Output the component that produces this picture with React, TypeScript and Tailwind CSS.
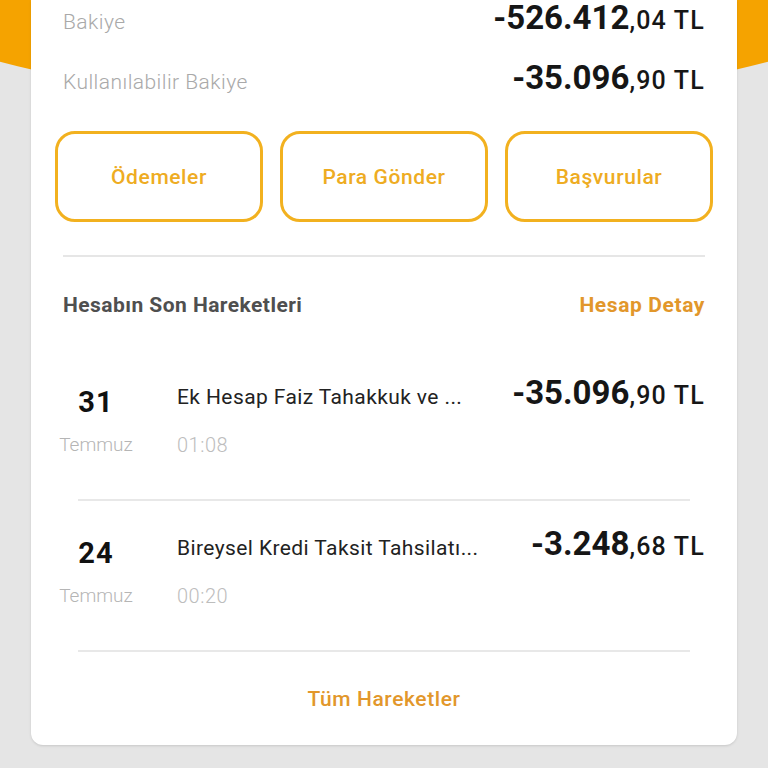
const Amount = ({ whole, cents }: { whole: string; cents: string }) => {
  return (
    <span className="whitespace-nowrap leading-none text-[#161616]">
      <span className="text-[33px] font-bold">{whole}</span>
      <span className="text-[25px] font-medium tracking-[1.2px]">,{cents} TL</span>
    </span>
  );
};

const Transaction = ({
  day,
  month,
  title,
  time,
  whole,
  cents,
}: {
  day: string;
  month: string;
  title: string;
  time: string;
  whole: string;
  cents: string;
}) => {
  return (
    <div className="flex items-start pl-[24px] pr-[32px]">
      <div className="w-[82px] flex flex-col items-center pt-[10px]">
        <span className="text-[29px] font-bold leading-[32px] tracking-[1px] text-[#111]">{day}</span>
        <span className="mt-[15px] text-[19px] font-light leading-[24px] text-[#b5b5b5]">{month}</span>
      </div>
      <div className="ml-[40px] flex-1 flex flex-col">
        <div className="flex justify-between items-baseline">
          <span className="text-[21px] leading-[28px] tracking-[0.4px] text-[#222]">{title}</span>
          <Amount whole={whole} cents={cents} />
        </div>
        <span className="mt-[22px] text-[20px] font-light leading-[24px] tracking-[0.5px] text-[#bdbdbd]">{time}</span>
      </div>
    </div>
  );
};

export default function App() {
  return (
    <div className="relative w-full min-h-screen overflow-hidden bg-[#e5e5e5] font-['Roboto',sans-serif]">
      <div className="absolute -top-[20px] -left-[116px] w-[1000px] h-[122px] bg-[#f5a300] rounded-b-[500px_112px]"></div>

      <div className="relative mx-[31px] bg-white rounded-b-[12px] shadow-sm">
        <div className="flex justify-between items-baseline px-[32px] pt-[1px] leading-none">
          <span className="text-[21px] font-light tracking-[0.45px] text-[#a9a9a9]">Bakiye</span>
          <Amount whole="-526.412" cents="04" />
        </div>
        <div className="mt-[27px] flex justify-between items-baseline px-[32px] leading-none">
          <span className="text-[21px] font-light tracking-[0.45px] text-[#a9a9a9]">Kullanılabilir Bakiye</span>
          <Amount whole="-35.096" cents="90" />
        </div>

        <div className="mt-[37px] px-[24px] grid grid-cols-3 gap-[17px]">
          {["Ödemeler", "Para Gönder", "Başvurular"].map((b) => (
            <button
              key={b}
              className="h-[91px] pt-[3px] rounded-[20px] border-[3px] border-[#f2b11f] text-[21px] font-medium tracking-[0.6px] text-[#eeac22]"
            >
              {b}
            </button>
          ))}
        </div>

        <div className="mt-[33px] mx-[32px] h-[2px] bg-[#e6e6e6]"></div>

        <div className="mt-[36px] flex justify-between items-center px-[32px] leading-[24px]">
          <span className="text-[21px] font-bold tracking-[0.45px] text-[#4f4f4f]">Hesabın Son Hareketleri</span>
          <span className="text-[21px] font-bold tracking-[0.6px] text-[#e2972b]">Hesap Detay</span>
        </div>

        <div className="mt-[59px]">
          <Transaction
            day="31"
            month="Temmuz"
            title="Ek Hesap Faiz Tahakkuk ve ..."
            time="01:08"
            whole="-35.096"
            cents="90"
          />
        </div>
        <div className="mt-[42px] mx-[47px] h-[2px] bg-[#e8e8e8]"></div>
        <div className="mt-[26px]">
          <Transaction
            day="24"
            month="Temmuz"
            title="Bireysel Kredi Taksit Tahsilatı..."
            time="00:20"
            whole="-3.248"
            cents="68"
          />
        </div>
        <div className="mt-[42px] mx-[47px] h-[2px] bg-[#e8e8e8]"></div>

        <div className="mt-[35px] pb-[32px] text-center leading-[24px]">
          <span className="text-[21px] font-medium tracking-[0.6px] text-[#e2972b]">Tüm Hareketler</span>
        </div>
      </div>
    </div>
  );
}
